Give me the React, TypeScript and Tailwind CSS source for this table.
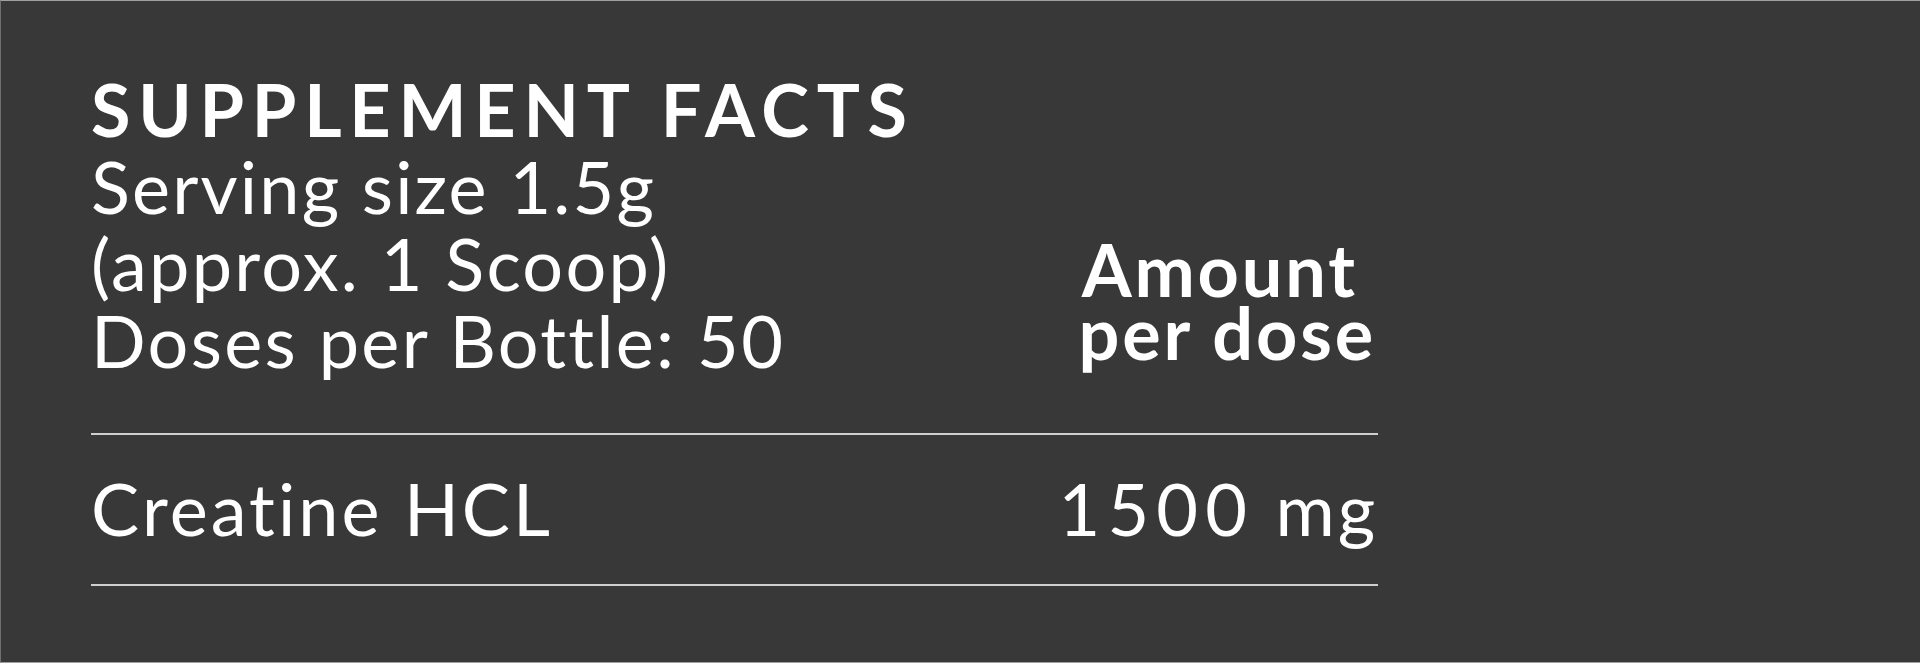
import React from "react";

export default function App() {
  return (
    <div
      className="w-full h-[663px] bg-[#383838] border-t border-b border-l border-t-[#a0a0a0] border-b-[#a0a0a0] border-l-[#707070] text-white overflow-hidden [font-variant-ligatures:none]"
      style={{ fontFamily: "Lato, 'Noto Sans', sans-serif" }}
    >
      <div className="ml-[90px] w-[1287px] pt-[70px]">
        <div className="flex items-start justify-between">
          <div className="flex flex-col">
            <div className="text-[72px] leading-[77px] font-bold tracking-[0.108em]">SUPPLEMENT FACTS</div>
            <div className="text-[72px] leading-[77px] font-normal tracking-[0.03em]">Serving size 1.5g</div>
            <div className="text-[72px] leading-[77px] font-normal tracking-[0.031em]">(approx. 1 Scoop)</div>
            <div className="text-[72px] leading-[77px] font-normal tracking-[0.032em]">Doses per Bottle: 50</div>
          </div>
          <div className="flex flex-col items-end mt-[167px] text-[72px] leading-[63px] font-bold tracking-[0.04em]">
            <div className="mr-[20px]">Amount</div>
            <div className="mr-[2px]">per dose</div>
          </div>
        </div>
        <div className="mt-[54px] h-[2px] bg-[#cfcfcf]" />
        <div className="flex justify-between mt-[35px] mb-[37px]">
          <div className="text-[72px] leading-[77px] font-normal tracking-[0.042em]">Creatine HCL</div>
          <div className="text-[72px] leading-[77px] font-normal">
            <span className="tracking-[0.1em]">1500</span>
            <span className="tracking-[0.04em]"> mg</span>
          </div>
        </div>
        <div className="h-[2px] bg-[#cfcfcf]" />
      </div>
    </div>
  );
}
